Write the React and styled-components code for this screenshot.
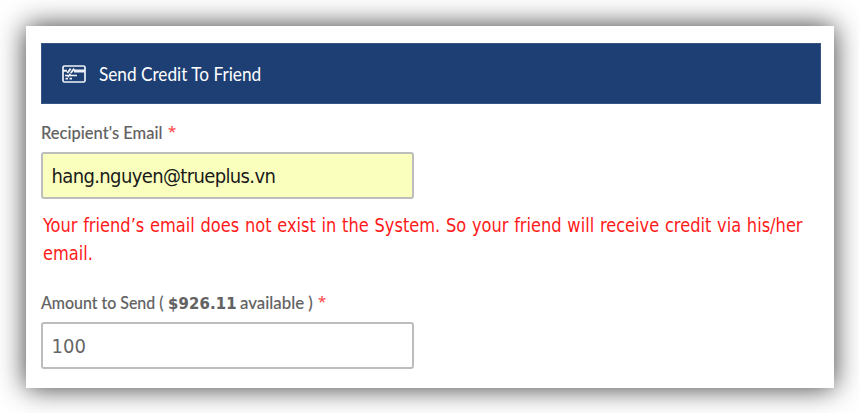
import React from "react";
import styled, { createGlobalStyle } from "styled-components";

const GlobalStyle = createGlobalStyle`
  * { box-sizing: border-box; }
  body { margin: 0; background: #fff; overflow: hidden; }
`;

const tahomaLike = `"DejaVu Sans Condensed", "DejaVu Sans", sans-serif`;

const Page = styled.main`
  width: 859px;
  height: 413px;
  padding: 26px 25px 25px 26px;
`;

const Card = styled.section`
  width: 808px;
  height: 362px;
  padding: 17px 13px 0 15px;
  background: #fff;
  box-shadow: 0 0 26px rgba(0, 0, 0, 0.78);
`;

const Header = styled.header`
  display: flex;
  align-items: center;
  height: 61px;
  padding: 0 0 0 20px;
  gap: 13px;
  background: #1e3f73;
  border: 1px solid #355583;
  color: #fff;
`;

/* Narrowed run of text; $scale is the horizontal factor. */
const Narrow = styled.span`
  display: inline-block;
  white-space: pre;
  transform-origin: left center;
  transform: scaleX(${(p) => p.$scale});
`;

const Title = styled.h1`
  margin: 0 0 2px;
  font: 400 20px/28px Lato, sans-serif;
`;

const Field = styled.div`
  display: flex;
  flex-direction: column;
`;

const Label = styled.label`
  display: flex;
  width: 300px;
  height: 26px;
  margin-top: ${(p) => p.$top}px;
  font: 500 16.5px/26px Lato, sans-serif;
  color: #626262;
  -webkit-text-stroke: 0.1px #626262;
`;

const Part = styled.span`
  flex: none;
  width: ${(p) => p.$width}px;
`;

const Amount = styled.b`
  font: 700 16.5px/26px ${tahomaLike};
  font-stretch: condensed;
  letter-spacing: 0.15px;
`;

const Star = styled.span`
  font: 400 15px/22px "Noto Sans", sans-serif;
  color: #ff4040;
  -webkit-text-stroke: 0;
`;

const Input = styled.input`
  width: 373px;
  height: 47px;
  margin-top: ${(p) => p.$top}px;
  padding: 1px 9px 0 8.5px;
  border: 2px solid #bdbdbd;
  border-radius: 3px;
  outline: 0;
  background: ${(p) => (p.$filled ? "#faffbd" : "#fff")};
  color: ${(p) => (p.$filled ? "#1a1a1a" : "#666")};
  font: 400 20px/28px ${tahomaLike};
  font-stretch: condensed;
  letter-spacing: ${(p) => p.$spacing}px;
`;

const ErrorText = styled.p`
  margin: 12px 0 0 2px;
  height: 56px;
  font: 400 19px/28px ${tahomaLike};
  font-stretch: condensed;
  color: #ff1a1a;
  white-space: nowrap;
`;

const Line = styled.span`
  display: block;
  width: 760px;
  transform-origin: left center;
  transform: scaleX(0.95);
  word-spacing: ${(p) => p.$gap}px;
`;

function CardIcon() {
  return (
    <svg width="24" height="18" viewBox="0 0 24 18" fill="none" stroke="#eef2f8">
      <rect x="1" y="1" width="22" height="16" rx="1.5" strokeWidth="1.7" />
      <path d="M12 6h11" strokeWidth="3" />
      <path d="M1 5.8h4M5.3 8l3.4-4.4M8.8 8l3.4-4.4" strokeWidth="1.9" />
      <path d="M3 10.5h3.2M6 12l2.4-3.4M8 10.5h7M3.5 13.6h2.5M7.5 13.6h2.5" strokeWidth="1.6" />
    </svg>
  );
}

export default function App() {
  return (
    <>
      <GlobalStyle />
      <Page>
        <Card>
          <Header>
            <CardIcon />
            <Title><Narrow $scale={0.86}>Send Credit To Friend</Narrow></Title>
          </Header>
          <Field>
            <Label $top={16} htmlFor="email">
              <Part $width={127}><Narrow $scale={1}>Recipient's Email</Narrow></Part>
              <Star>*</Star>
            </Label>
            <Input id="email" $top={6} $filled $spacing={-0.63} defaultValue="hang.nguyen@trueplus.vn" />
            <ErrorText>
              <Line $gap={0.6}>Your friend’s email does not exist in the System. So your friend will receive credit via his/her</Line>
              <Line $gap={0}>email.</Line>
            </ErrorText>
          </Field>
          <Field>
            <Label $top={23} htmlFor="amount">
              <Part $width={127}><Narrow $scale={0.965}>Amount to Send (</Narrow></Part>
              <Part $width={72}><Amount>$926.11</Amount></Part>
              <Part $width={78}><Narrow $scale={1.02}>available )</Narrow></Part>
              <Star>*</Star>
            </Label>
            <Input id="amount" $top={6} $spacing={0} defaultValue="100" />
          </Field>
        </Card>
      </Page>
    </>
  );
}
